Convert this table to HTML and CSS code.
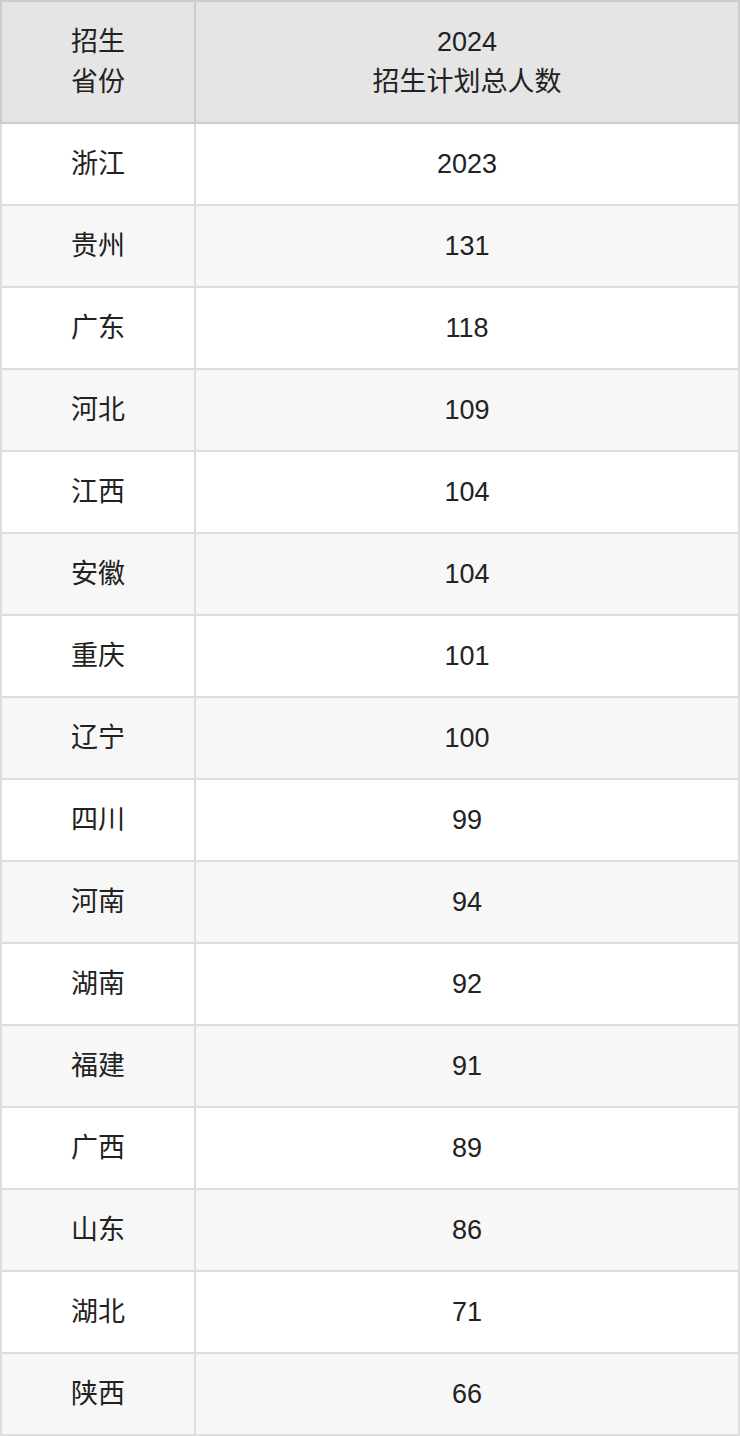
FILE: index.html
```html
<!DOCTYPE html>
<html lang="zh">
<head>
<meta charset="utf-8">
<title>招生计划</title>
<link rel="stylesheet" href="styles.css">
</head>
<body>
<table class="plan">
  <thead>
    <tr>
      <th class="col-prov">招生<br>省份</th>
      <th class="col-num">2024<br>招生计划总人数</th>
    </tr>
  </thead>
  <tbody>
    <tr><td>浙江</td><td>2023</td></tr>
    <tr><td>贵州</td><td>131</td></tr>
    <tr><td>广东</td><td>118</td></tr>
    <tr><td>河北</td><td>109</td></tr>
    <tr><td>江西</td><td>104</td></tr>
    <tr><td>安徽</td><td>104</td></tr>
    <tr><td>重庆</td><td>101</td></tr>
    <tr><td>辽宁</td><td>100</td></tr>
    <tr><td>四川</td><td>99</td></tr>
    <tr><td>河南</td><td>94</td></tr>
    <tr><td>湖南</td><td>92</td></tr>
    <tr><td>福建</td><td>91</td></tr>
    <tr><td>广西</td><td>89</td></tr>
    <tr><td>山东</td><td>86</td></tr>
    <tr><td>湖北</td><td>71</td></tr>
    <tr><td>陕西</td><td>66</td></tr>
  </tbody>
</table>
</body>
</html>
```

FILE: styles.css
```css
html, body {
  margin: 0;
  padding: 0;
  background: #ffffff;
}

.plan {
  width: 740px;
  border-collapse: collapse;
  table-layout: fixed;
  font-family: "Liberation Sans", Arial, "Noto Sans CJK SC", sans-serif;
  font-size: 27px;
  line-height: 40px;
  color: #222222;
}

.plan th,
.plan td {
  padding: 0;
  text-align: center;
  vertical-align: middle;
  font-weight: normal;
  border: 2px solid #dddddd;
}

.plan th {
  background: #e5e5e5;
  border-color: #cccccc;
  height: 120px;
}

.plan td {
  height: 80px;
}

.col-prov {
  width: 192px;
}

.plan tbody tr:nth-child(odd) td {
  background: #ffffff;
}

.plan tbody tr:nth-child(even) td {
  background: #f7f7f7;
}
```
